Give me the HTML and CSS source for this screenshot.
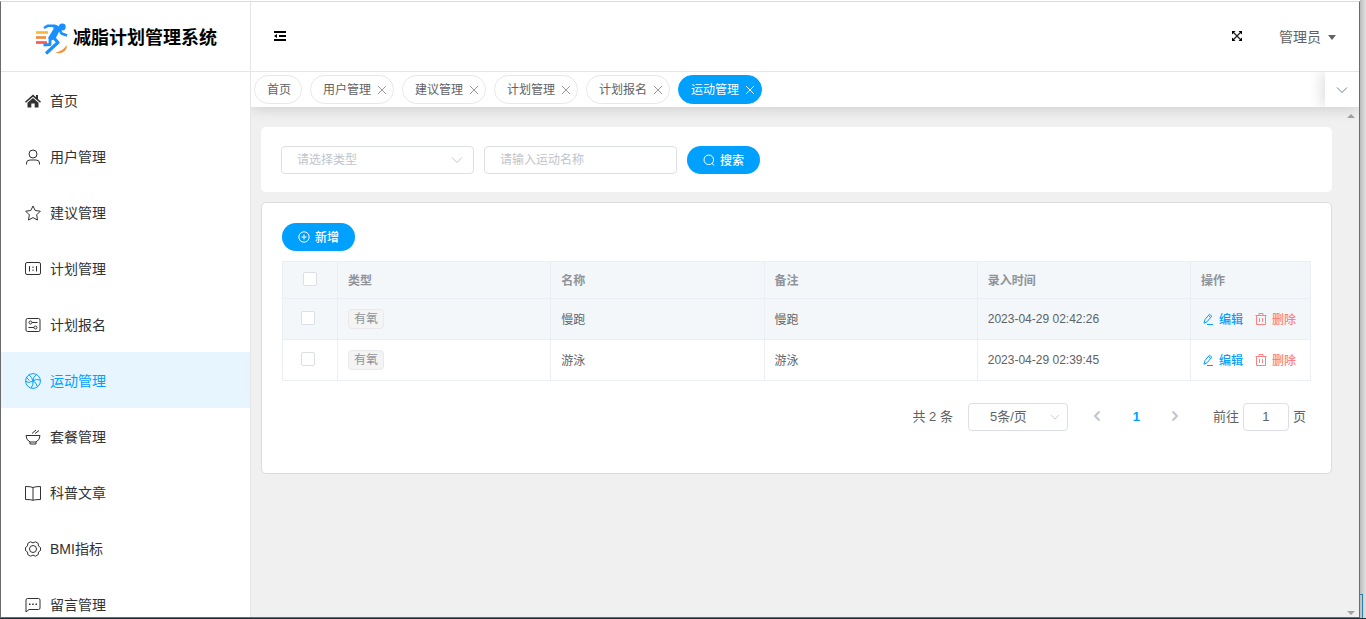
FILE: index.html
```html
<!DOCTYPE html>
<html lang="zh-CN">
<head>
  <meta charset="UTF-8">
  <meta name="viewport" content="width=device-width, initial-scale=1.0">
  <title>减脂计划管理系统</title>
  <link rel="stylesheet" href="styles.css">
</head>
<body>
  <div class="window">
    <aside class="sidebar">
      <div class="logo">
        <svg class="logo-img" viewBox="0 0 34 34">
          <g fill="none" stroke-width="2.600">
            <path d="M1 11.500H13" stroke="#f5b83d"/>
            <path d="M1 16.500H11" stroke="#f08a3c"/>
            <path d="M1 21.500H12" stroke="#ee5a5a"/>
          </g>
          <circle cx="27.300" cy="6" r="3.400" fill="#1890ff"/>
          <g fill="none" stroke="#1890ff" stroke-width="2.600" stroke-linejoin="round">
            <path d="M9 7L12.500 4.800L20 4.800L24 7L26.500 12.500L32 14.500"/>
            <path d="M18 16L23 21.500L18 26L11 32.500" stroke-width="3.200"/>
            <path d="M15 17L15 23.500L8.500 24" stroke-width="2.800"/>
          </g>
          <path d="M18 4.500H22L25.500 8L20.500 17.500L16.500 19.500L13 17L18.500 8Z" fill="#1890ff"/>
          <path d="M32 24C32 30 27 33.500 20 31.800C26 30.500 28.500 28 32 24Z" fill="#f5923e"/>
        </svg>
        <h1>减脂计划管理系统</h1>
      </div>
      <nav class="menu">
        <a href="#" class="menu-item">
          <svg class="icon" viewBox="0 0 16 16"><path class="solid" d="M8 1.500L11 4.200V2H13V6L16 8.700L15 9.800L8 3.700L1 9.800L0 8.700Z M8 5L13.500 9.800V14.500H9.700V10.500H6.300V14.500H2.500V9.800Z"/></svg>
          <span>首页</span>
        </a>
        <a href="#" class="menu-item">
          <svg class="icon" viewBox="0 0 16 16"><circle cx="8" cy="5" r="4"/><path d="M1.500 15.500V14Q1.500 11 5 11H11Q14.500 11 14.500 14V15.500"/></svg>
          <span>用户管理</span>
        </a>
        <a href="#" class="menu-item">
          <svg class="icon" viewBox="0 0 16 16"><path d="M8 1L10.200 5.500L15.300 6.200L11.700 9.800L12.500 15L8 12.600L3.500 15L4.300 9.800L0.700 6.200L5.800 5.500Z"/></svg>
          <span>建议管理</span>
        </a>
        <a href="#" class="menu-item">
          <svg class="icon" viewBox="0 0 16 16"><rect x="0.500" y="1.500" width="15" height="12" rx="1.500"/><path d="M4.500 5V10.500M11.500 5V10.500M8 5.500V7M8 8.500V10"/></svg>
          <span>计划管理</span>
        </a>
        <a href="#" class="menu-item">
          <svg class="icon" viewBox="0 0 16 16"><rect x="1" y="1.500" width="14" height="13" rx="1.500"/><circle cx="5.500" cy="5.500" r="1.500"/><path d="M7 5.500H12.500M3.500 10.500H9"/><circle cx="10.500" cy="10.500" r="1.500"/></svg>
          <span>计划报名</span>
        </a>
        <a href="#" class="menu-item active">
          <svg class="icon" viewBox="0 0 16 16"><circle cx="8" cy="8" r="7.400"/><path d="M8 8Q7 4 4 1.800M8 8Q8 4 11.500 1.500M8 8Q11 5.500 15.400 7M8 8Q11.500 9.500 12.500 13.800M8 8Q8.500 12 6 15.200M8 8Q4 10.500 0.700 8.500M4.500 7.500Q2.500 6 1.800 4.500"/></svg>
          <span>运动管理</span>
        </a>
        <a href="#" class="menu-item">
          <svg class="icon" viewBox="0 0 16 16"><path d="M1 6.500H15Q15 11 11 13V15H5V13Q1 11 1 6.500ZM5 13H11M7 4.500L11 1M10 4.500L14 1.500"/></svg>
          <span>套餐管理</span>
        </a>
        <a href="#" class="menu-item">
          <svg class="icon" viewBox="0 0 16 16"><path d="M8 2.500Q6 1.500 0.500 1.500V14.500Q6 14.500 8 15.300Q10 14.500 15.500 14.500V1.500Q10 1.500 8 2.500ZM8 2.500V15"/></svg>
          <span>科普文章</span>
        </a>
        <a href="#" class="menu-item">
          <svg class="icon" viewBox="0 0 16 16"><circle cx="8" cy="8" r="3.500"/><path d="M5.500 0.800Q8 3 10.500 0.800L13.200 2.400Q12.600 5.500 15.500 6.500V9.500Q12.600 10.500 13.200 13.600L10.500 15.200Q8 13 5.500 15.200L2.800 13.600Q3.400 10.500 0.500 9.500V6.500Q3.400 5.500 2.800 2.400Z"/></svg>
          <span>BMI指标</span>
        </a>
        <a href="#" class="menu-item">
          <svg class="icon" viewBox="0 0 16 16"><path d="M2.500 1.500H13.500Q15 1.500 15 3V11Q15 12.500 13.500 12.500H4L1 15V3Q1 1.500 2.500 1.500Z"/><path class="solid" d="M4 6.500H5.500V8H4ZM7.200 6.500H8.700V8H7.200ZM10.500 6.500H12V8H10.500Z"/></svg>
          <span>留言管理</span>
        </a>
      </nav>
    </aside>

    <div class="main">
      <header class="header">
        <button class="icon-btn" aria-label="折叠菜单">
          <svg class="fold" viewBox="0 0 12 10"><path d="M0 1H12M5 5H12M0 9H12" stroke="#000" stroke-width="2"/><path d="M0 5L3 3V7Z"/></svg>
        </button>
        <div class="header-right">
          <button class="icon-btn" aria-label="全屏">
            <svg class="full" viewBox="0 0 12 12"><path d="M2 2L10 10M10 2L2 10" stroke="#222" stroke-width="1.200"/><path d="M1 1H4.500L1 4.500ZM11 1V4.500L7.500 1ZM1 11V7.500L4.500 11ZM11 11H7.500L11 7.500Z"/></svg>
          </button>
          <button class="user">管理员 <svg class="caret" viewBox="0 0 8 5"><path d="M0 0H8L4 5Z"/></svg></button>
        </div>
      </header>

      <div class="tabs">
        <div class="tab-list">
          <button class="tab">首页</button>
          <button class="tab">用户管理<svg class="close" viewBox="0 0 10 10"><path d="M1 1L9 9M9 1L1 9"/></svg></button>
          <button class="tab">建议管理<svg class="close" viewBox="0 0 10 10"><path d="M1 1L9 9M9 1L1 9"/></svg></button>
          <button class="tab">计划管理<svg class="close" viewBox="0 0 10 10"><path d="M1 1L9 9M9 1L1 9"/></svg></button>
          <button class="tab">计划报名<svg class="close" viewBox="0 0 10 10"><path d="M1 1L9 9M9 1L1 9"/></svg></button>
          <button class="tab active">运动管理<svg class="close" viewBox="0 0 10 10"><path d="M1 1L9 9M9 1L1 9"/></svg></button>
        </div>
        <button class="tabs-more" aria-label="更多标签"><svg class="arrow" viewBox="0 0 12 12"><path d="M1 3.500L6 8.500L11 3.500"/></svg></button>
      </div>

      <div class="body">
        <main class="content">
          <form class="card search">
            <div class="select type-select">
              <select class="placeholder" aria-label="类型">
                <option>请选择类型</option>
                <option>有氧</option>
              </select>
              <svg class="arrow" viewBox="0 0 12 12"><path d="M1 3.500L6 8.500L11 3.500"/></svg>
            </div>
            <input class="field" type="text" placeholder="请输入运动名称" aria-label="运动名称">
            <button type="button" class="btn"><svg class="btn-icon" viewBox="0 0 12 12"><circle cx="5.800" cy="5.800" r="4.800"/><path d="M9 9.500L11.300 11.500"/></svg>搜索</button>
          </form>

          <section class="card panel">
            <button class="btn"><svg class="btn-icon" viewBox="0 0 12 12"><circle cx="6" cy="6" r="5.200"/><path d="M6 3.500V8.500M3.500 6H8.500"/></svg>新增</button>
            <table class="table">
              <colgroup>
                <col class="col-check">
                <col><col><col><col>
                <col class="col-action">
              </colgroup>
              <thead>
                <tr>
                  <th class="check"><input type="checkbox" aria-label="全选"></th>
                  <th>类型</th>
                  <th>名称</th>
                  <th>备注</th>
                  <th>录入时间</th>
                  <th>操作</th>
                </tr>
              </thead>
              <tbody>
                <tr class="hover">
                  <td class="check"><input type="checkbox" aria-label="选择慢跑"></td>
                  <td class="type"><span class="tag">有氧</span></td>
                  <td>慢跑</td>
                  <td>慢跑</td>
                  <td class="time">2023-04-29 02:42:26</td>
                  <td>
                    <div class="actions">
                      <button class="link"><svg class="btn-icon" viewBox="0 0 12 12"><path d="M3 6.500L7.500 1.200L9.800 3.200L5 8.800L2 10.200ZM6.500 2.500L8.700 4.500M5 11.500H11"/></svg>编辑</button>
                      <button class="link danger"><svg class="btn-icon" viewBox="0 0 12 12"><path d="M0.500 2.500H11.500M4 2.500V0.500H8V2.500M1.500 2.500V11.500H10.500V2.500M4.500 5V9M7.500 5V9"/></svg>删除</button>
                    </div>
                  </td>
                </tr>
                <tr>
                  <td class="check"><input type="checkbox" aria-label="选择游泳"></td>
                  <td class="type"><span class="tag">有氧</span></td>
                  <td>游泳</td>
                  <td>游泳</td>
                  <td class="time">2023-04-29 02:39:45</td>
                  <td>
                    <div class="actions">
                      <button class="link"><svg class="btn-icon" viewBox="0 0 12 12"><path d="M3 6.500L7.500 1.200L9.800 3.200L5 8.800L2 10.200ZM6.500 2.500L8.700 4.500M5 11.500H11"/></svg>编辑</button>
                      <button class="link danger"><svg class="btn-icon" viewBox="0 0 12 12"><path d="M0.500 2.500H11.500M4 2.500V0.500H8V2.500M1.500 2.500V11.500H10.500V2.500M4.500 5V9M7.500 5V9"/></svg>删除</button>
                    </div>
                  </td>
                </tr>
              </tbody>
            </table>

            <div class="pagination">
              <span class="total">共 2 条</span>
              <div class="select size-select">
                <select aria-label="每页条数">
                  <option>5条/页</option>
                  <option>10条/页</option>
                </select>
                <svg class="arrow" viewBox="0 0 12 12"><path d="M1 3.500L6 8.500L11 3.500"/></svg>
              </div>
              <div class="pager">
                <button class="page" aria-label="上一页"><svg class="chev" viewBox="0 0 12 12"><path d="M8.500 1.500L4 6L8.500 10.500"/></svg></button>
                <button class="page current">1</button>
                <button class="page" aria-label="下一页"><svg class="chev" viewBox="0 0 12 12"><path d="M3.500 1.500L8 6L3.500 10.500"/></svg></button>
              </div>
              <label class="jump"><span>前往</span><input class="field" type="text" value="1"><span>页</span></label>
            </div>
          </section>
        </main>
        <div class="scrollbar">
          <svg class="scroll-arrow" viewBox="0 0 8 4"><path d="M0 4L4 0L8 4Z"/></svg>
          <svg class="scroll-arrow" viewBox="0 0 8 4"><path d="M0 0H8L4 4Z"/></svg>
        </div>
      </div>
    </div>
  </div>
  <div class="edge"></div>
</body>
</html>
```

FILE: styles.css
```css
:root {
  --primary: #00a0ff;
  --text: #606266;
  --dark: #303133;
  --muted: #909399;
  --placeholder: #c0c4cc;
  --border: #dcdfe6;
  --line: #e6e6e6;
  --table-line: #ebeef5;
  --page: #f0f0f0;
  --frame: #6b6b6b;
}

* {
  box-sizing: border-box;
}
body {
  margin: 0;
  height: 100vh;
  display: flex;
  overflow: hidden;
  border-bottom: 1px solid #1f2d38;
  background: #fff;
  color: var(--text);
  font-family: "Liberation Sans", "Noto Sans CJK SC", sans-serif;
  font-size: 12px;
}
button, input, select {
  font: inherit;
  color: inherit;
}
button {
  display: inline-flex;
  align-items: center;
  justify-content: center;
  padding: 0;
  border: none;
  background: none;
  cursor: pointer;
}
svg {
  display: block;
  flex: none;
}

/* window */
.window {
  flex: 1;
  min-width: 0;
  display: flex;
  margin-top: 1px;
  border: 1px solid var(--frame);
  border-top-color: #dcdcdc;
}
.edge {
  position: relative;
  width: 6px;
  background: linear-gradient(to right, #bcbcbc, #e2e2e2);
}
.edge::after {
  content: "";
  position: absolute;
  left: -1px;
  bottom: 0;
  width: 3px;
  height: 23px;
  border: 1px solid #2d7fa8;
  border-left: none;
  border-bottom: none;
}

/* sidebar */
.sidebar {
  width: 250px;
  flex: none;
  border-right: 1px solid var(--line);
  overflow: hidden;
}
.logo {
  display: flex;
  align-items: center;
  gap: 4px;
  height: 70px;
  padding-left: 34px;
  border-bottom: 1px solid var(--line);
}
.logo-img {
  width: 34px;
  height: 34px;
  margin-top: 2px;
}
.logo h1 {
  margin: 0;
  padding-bottom: 2px;
  font-size: 18px;
  font-weight: bold;
  color: #000;
}
.menu-item {
  display: flex;
  align-items: center;
  gap: 9px;
  height: 56px;
  padding-left: 24px;
  font-size: 14px;
  color: var(--dark);
  text-decoration: none;
}
.menu-item.active {
  background: #e6f5ff;
  color: var(--primary);
}
.icon {
  width: 16px;
  height: 16px;
  margin-top: 2px;
  fill: none;
  stroke: currentColor;
}
.icon .solid {
  fill: currentColor;
  stroke: none;
}

/* header */
.main {
  flex: 1;
  min-width: 0;
  display: flex;
  flex-direction: column;
}
.header {
  display: flex;
  align-items: center;
  justify-content: space-between;
  height: 70px;
  flex: none;
  padding: 0 23px 2px;
  border-bottom: 1px solid var(--line);
}
.header-right {
  display: flex;
  align-items: center;
  gap: 36px;
}
.fold {
  width: 12px;
  height: 10px;
}
.full {
  width: 12px;
  height: 12px;
}
.user {
  gap: 7px;
  font-size: 14px;
}
.caret {
  width: 8px;
  height: 5px;
  margin-top: 4px;
  fill: currentColor;
}

/* tabs */
.tabs {
  position: relative;
  display: flex;
  height: 35px;
  flex: none;
  background: #fff;
  box-shadow: 0 2px 14px rgba(0, 0, 0, 0.15);
  clip-path: inset(0 0 -20px 0);
}
.tab-list {
  flex: 1;
  display: flex;
  align-items: center;
  gap: 8px;
  padding-left: 3px;
}
.tab {
  height: 29px;
  gap: 6px;
  padding: 0 10px 2px 12px;
  border: 1px solid #e8e8e8;
  border-radius: 15px;
}
.tab:has(.close) {
  padding-right: 6px;
}
.tab.active {
  background: var(--primary);
  border-color: var(--primary);
  color: #fff;
}
.close {
  width: 10px;
  height: 10px;
  margin-top: 2px;
  stroke: #999;
}
.active .close {
  stroke: #fff;
}
.tabs-more {
  width: 34px;
  box-shadow: -4px 0 14px rgba(0, 0, 0, 0.12);
  clip-path: inset(0 0 0 -20px);
}
.arrow, .chev {
  width: 12px;
  height: 12px;
  fill: none;
  stroke: var(--muted);
}
.tabs-more .arrow {
  stroke: #6c7f8c;
}

/* content */
.body {
  flex: 1;
  min-height: 0;
  display: flex;
  background: var(--page);
}
.content {
  flex: 1;
  min-width: 0;
  padding: 20px 10px;
}
.scrollbar {
  width: 17px;
  display: flex;
  flex-direction: column;
  align-items: center;
  justify-content: space-between;
  padding: 7px 0 2px;
}
.scroll-arrow {
  width: 8px;
  height: 4px;
  fill: #a3a3a3;
}
.card {
  background: #fff;
  border-radius: 5px;
}
.search {
  display: flex;
  gap: 10px;
  height: 65px;
  padding: 19px 20px;
  margin-bottom: 10px;
}
.panel {
  min-height: 272px;
  padding: 20px;
  border: 1px solid #dcdcdc;
}

/* fields */
.field, .select select {
  height: 28px;
  border: 1px solid var(--border);
  border-radius: 4px;
  background: #fff;
  outline: none;
}
.search .field {
  width: 193px;
  padding: 0 15px;
}
.field::placeholder {
  color: var(--placeholder);
}
.select {
  position: relative;
}
.select select {
  width: 100%;
  padding: 0 15px;
  appearance: none;
}
.select .placeholder {
  color: var(--placeholder);
}
.select .arrow {
  position: absolute;
  right: 11px;
  top: 8px;
  stroke: var(--placeholder);
  pointer-events: none;
}
.type-select {
  width: 193px;
}
.btn {
  gap: 5px;
  width: 73px;
  height: 28px;
  padding-bottom: 2px;
  border-radius: 14px;
  background: var(--primary);
  color: #fff;
  font-weight: 500;
}
.btn-icon {
  width: 12px;
  height: 12px;
  margin-top: 2px;
  fill: none;
  stroke: currentColor;
}

/* table */
.table {
  width: 100%;
  margin-top: 10px;
  border-collapse: collapse;
  table-layout: fixed;
}
.col-check {
  width: 55px;
}
.col-action {
  width: 120px;
}
.table th, .table td {
  height: 41px;
  padding: 0 10px 2px;
  border: 1px solid var(--table-line);
  text-align: left;
}
.table .time, .table .type {
  padding-bottom: 0;
}
.table th {
  height: 37px;
  background: #f3f7fa;
  color: var(--muted);
  font-weight: bold;
}
.table .hover {
  background: #f3f7fa;
}
.table .check {
  padding: 0 4px 2px 0;
  text-align: center;
}
.table th.check {
  padding-right: 0;
}
.check input {
  display: inline-block;
  width: 14px;
  height: 14px;
  margin: 0;
  border: 1px solid var(--border);
  border-radius: 2px;
  background: #fff;
  appearance: none;
  vertical-align: middle;
}
.tag {
  display: inline-block;
  height: 20px;
  padding: 0 5px;
  border: 1px solid #e9e9eb;
  border-radius: 4px;
  background: #f4f4f5;
  color: var(--muted);
  line-height: 19px;
  vertical-align: middle;
}
.actions {
  display: flex;
  gap: 12px;
  padding-left: 1px;
}
.link {
  gap: 5px;
  color: var(--primary);
  font-weight: 500;
}
.link.danger {
  color: #ff8080;
}

/* pagination */
.pagination {
  display: flex;
  align-items: center;
  justify-content: flex-end;
  margin-top: 22px;
  padding-right: 5px;
  font-size: 13px;
}
.total, .jump span {
  padding-bottom: 3px;
}
.size-select {
  width: 100px;
  margin-left: 15px;
}
.size-select select {
  padding: 0 21px 2px;
}
.size-select .arrow {
  width: 10px;
  right: 8px;
}
.pager {
  display: flex;
  margin: 0 18px 0 10px;
}
.page {
  width: 39px;
  height: 28px;
  padding-bottom: 2px;
}
.page.current {
  color: var(--primary);
  font-weight: bold;
}
.chev {
  stroke: var(--placeholder);
  stroke-width: 2;
}
.jump {
  display: flex;
  align-items: center;
  gap: 4px;
}
.jump .field {
  width: 46px;
  padding: 0 3px 2px;
  text-align: center;
}
```
